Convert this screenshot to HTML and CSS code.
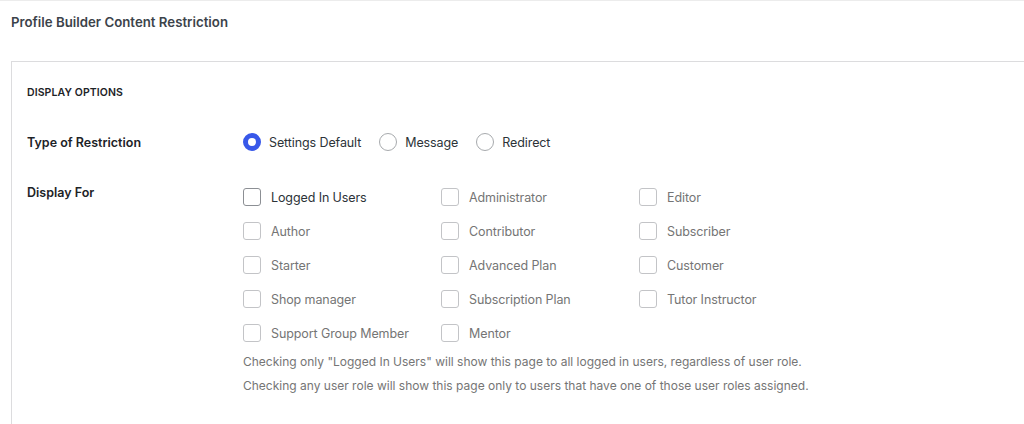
FILE: index.html
```html
<!DOCTYPE html>
<html>
<head>
<meta charset="utf-8">
<link rel="stylesheet" href="styles.css">
</head>
<body>
<div class="page">
  <div class="header">
    <h2 class="title">Profile Builder Content Restriction</h2>
  </div>
  <div class="box">
    <h3 class="section">DISPLAY OPTIONS</h3>
    <div class="row row-radio">
      <div class="label">Type of Restriction</div>
      <div class="field radios">
        <label class="radio"><span class="dot checked"></span><span>Settings Default</span></label>
        <label class="radio"><span class="dot"></span><span>Message</span></label>
        <label class="radio"><span class="dot"></span><span>Redirect</span></label>
      </div>
    </div>
    <div class="row row-check">
      <div class="label label-check">Display For</div>
      <div class="field">
        <div class="grid">
          <label class="check strong"><span class="box-c"></span><span>Logged In Users</span></label>
          <label class="check"><span class="box-c"></span><span>Administrator</span></label>
          <label class="check"><span class="box-c"></span><span>Editor</span></label>
          <label class="check"><span class="box-c"></span><span>Author</span></label>
          <label class="check"><span class="box-c"></span><span>Contributor</span></label>
          <label class="check"><span class="box-c"></span><span>Subscriber</span></label>
          <label class="check"><span class="box-c"></span><span>Starter</span></label>
          <label class="check"><span class="box-c"></span><span>Advanced Plan</span></label>
          <label class="check"><span class="box-c"></span><span>Customer</span></label>
          <label class="check"><span class="box-c"></span><span>Shop manager</span></label>
          <label class="check"><span class="box-c"></span><span>Subscription Plan</span></label>
          <label class="check"><span class="box-c"></span><span>Tutor Instructor</span></label>
          <label class="check"><span class="box-c"></span><span>Support Group Member</span></label>
          <label class="check"><span class="box-c"></span><span>Mentor</span></label>
        </div>
        <p class="help">Checking only "Logged In Users" will show this page to all logged in users, regardless of user role.</p>
        <p class="help">Checking any user role will show this page only to users that have one of those user roles assigned.</p>
      </div>
    </div>
  </div>
</div>
</body>
</html>
```

FILE: styles.css
```css
* { box-sizing: border-box; }
html, body { margin: 0; padding: 0; background: #fff; }
body {
  font-family: Inter, "Liberation Sans", Arial, sans-serif;
  color: #1d2327;
  width: 1024px;
  height: 424px;
  overflow: hidden;
}
.page {
  border-top: 1px solid #ececec;
  height: 424px;
  overflow: hidden;
}
.header {
  height: 60px;
  padding: 13px 0 0 11px;
}
.title {
  margin: 0;
  font-size: 13.25px;
  font-weight: 600;
  color: #3c434a;
  line-height: 16px;
}
.box {
  margin-left: 11px;
  width: 1040px;
  border: 1px solid #dcdcde;
  border-right: none;
  border-bottom: none;
  padding: 24px 0 0 15px;
  height: 363px;
}
.section {
  margin: 0;
  font-size: 10.5px;
  font-weight: 600;
  line-height: 14px;
  color: #1d2327;
  letter-spacing: 0.1px;
}
.row {
  display: flex;
}
.row-radio {
  margin-top: 33px;
  align-items: center;
}
.label {
  width: 216px;
  font-size: 12.5px;
  font-weight: 600;
  color: #1d2327;
}
.radios {
  display: flex;
}
.radio {
  display: flex;
  align-items: center;
  font-size: 12.5px;
  letter-spacing: -0.1px;
  color: #2c3338;
  margin-right: 18px;
}
.dot {
  width: 18px;
  height: 18px;
  border-radius: 50%;
  border: 1px solid #a7aaad;
  margin-right: 8px;
  flex: none;
}
.dot.checked {
  border: 5px solid #3858e9;
  background: #fff;
}
.row-check {
  margin-top: 34px;
}
.grid {
  display: grid;
  grid-template-columns: 198px 198px 198px;
  grid-auto-rows: 34px;
  margin-top: -5px;
}
.check {
  display: flex;
  align-items: center;
  font-size: 12.5px;
  letter-spacing: -0.1px;
  color: #757575;
}
.check.strong { color: #2c3338; }
.box-c {
  width: 18px;
  height: 18px;
  border: 1px solid #c3c4c7;
  border-radius: 3px;
  margin-right: 10px;
  flex: none;
}
.check.strong .box-c { border-color: #8c8f94; }
.help {
  margin: 0;
  font-size: 12px;
  line-height: 24px;
  color: #757575;
}
```
